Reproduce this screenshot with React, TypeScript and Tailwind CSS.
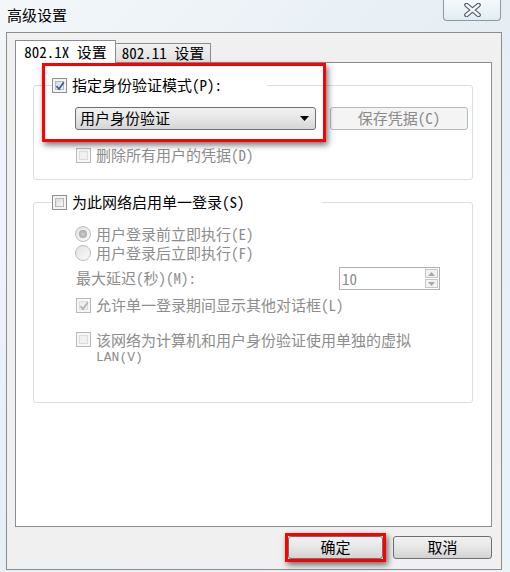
import React from 'react';

const font = "font-['Noto_Sans_Mono_CJK_SC','Noto_Sans_CJK_SC',sans-serif]";

function CheckBox({ checked = false, disabled = false }: { checked?: boolean; disabled?: boolean }) {
    return (
        <span
            className={`relative flex shrink-0 w-[15px] h-[15px] border p-[2px] ${
                disabled ? 'border-[#b8b8b8] bg-[#f7f7f7]' : 'border-[#8e8f8f] bg-[#f4f4f4]'
            }`}
        >
            <span
                className={`flex-1 border ${
                    disabled
                        ? 'border-[#dcdcdc] bg-[#f0f0f0]'
                        : 'border-[#b9b9b9] bg-linear-to-br from-[#d9d9d9] to-[#fafafa]'
                }`}
            />
            {checked && (
                <svg className="absolute left-[1px] top-[1px]" width="12" height="12" viewBox="0 0 12 12">
                    <path
                        d="M2.5 6.2 L5 9 L9.8 2.2"
                        fill="none"
                        stroke={disabled ? '#b4b4b4' : '#3f5aa8'}
                        strokeWidth="1.8"
                    />
                </svg>
            )}
        </span>
    );
}

function Radio({ checked = false }: { checked?: boolean }) {
    return (
        <span className="flex shrink-0 items-center justify-center w-[16px] h-[16px] rounded-full border border-[#bdbdbd] bg-linear-to-br from-[#e2e2e2] to-[#fbfbfb]">
            {checked && <span className="w-[8px] h-[8px] rounded-full bg-radial from-[#d0d0d0] to-[#9a9a9a]" />}
        </span>
    );
}

function Legend({ width, children }: { width: string; children: React.ReactNode }) {
    return (
        <div className={`relative z-10 -mb-[8px] ml-[19px] flex h-[16px] items-center gap-[5px] bg-white ${width}`}>
            {children}
        </div>
    );
}

export default function App() {
    return (
        <div
            className={`w-[510px] h-[572px] overflow-hidden bg-linear-to-br from-[#f3f7fa] via-[#e6eef4] to-[#eaf3f7] text-[15px] text-black ${font}`}
        >
            {/* title bar */}
            <div className="flex h-[32px] items-start justify-between">
                <div className="pl-[7px] pt-[5px] leading-[20px] [text-shadow:0_0_6px_#fff]">高级设置</div>
                <div className="mr-[9px] flex h-[21px] w-[58px] items-center justify-center rounded-b-[4px] border border-t-0 border-[#8d98a5] bg-linear-to-b from-[#f6fafc] to-[#dfeef3]">
                    <svg width="17" height="14" viewBox="0 0 17 14">
                        <path d="M2.5 2 L14.5 12 M14.5 2 L2.5 12" stroke="#4b5563" strokeWidth="4.6" strokeLinecap="round" />
                        <path d="M2.5 2 L14.5 12 M14.5 2 L2.5 12" stroke="#f4f6f8" strokeWidth="2.4" strokeLinecap="round" />
                    </svg>
                </div>
            </div>

            {/* client area */}
            <div className="ml-[6px] flex h-[538px] w-[496px] flex-col border border-[#8c8c8c] bg-[#f0f0f0] pl-[8px] pr-[9px] pt-[7px]">
                <div className="flex h-[22px] items-end">
                    <div className="relative z-10 -mb-px flex h-[23px] w-[101px] items-center justify-center border border-b-0 border-[#898c95] bg-white">
                        802.1X 设置
                    </div>
                    <div className="flex h-[19px] w-[95px] items-center justify-center border border-l-0 border-b-0 border-[#898c95] bg-linear-to-b from-[#f2f2f2] to-[#e1e1e1]">
                        802.11 设置
                    </div>
                </div>

                <div className="relative h-[465px] w-[477px] border border-[#898c95] bg-white pl-[17px]">
                    {/* group 1 */}
                    <div className="mt-[14px] w-[440px]">
                        <Legend width="w-[215px]">
                            <CheckBox checked />
                            <span>指定身份验证模式(P):</span>
                        </Legend>
                        <div className="h-[95px] rounded-[3px] border border-[#d5dfe5] pl-[41px] pt-[21px]">
                            <div className="flex gap-[14px]">
                                <div className="flex h-[23px] w-[241px] items-center justify-between rounded-[3px] border border-[#707070] bg-linear-to-b from-[#f2f2f2] via-[#e6e6e6] to-[#d6d6d6] pl-[4px] pr-[6px]">
                                    <span>用户身份验证</span>
                                    <svg width="9" height="5" viewBox="0 0 9 5">
                                        <path d="M0 0 H9 L4.5 5 Z" fill="#000" />
                                    </svg>
                                </div>
                                <div className="flex h-[23px] w-[138px] items-center justify-center rounded-[3px] border border-[#b5b9bc] bg-[#f4f4f4] text-[#8a8a8a]">
                                    保存凭据(C)
                                </div>
                            </div>
                            <div className="mt-[17px] flex h-[16px] items-center gap-[5px] pl-[1px] text-[#8d8d8d]">
                                <CheckBox disabled />
                                <span>删除所有用户的凭据(D)</span>
                            </div>
                        </div>
                    </div>

                    {/* group 2 */}
                    <div className="mt-[14px] w-[440px]">
                        <Legend width="w-[270px]">
                            <CheckBox />
                            <span>为此网络启用单一登录(S)</span>
                        </Legend>
                        <div className="h-[201px] rounded-[3px] border border-[#d5dfe5] pl-[41px] pr-[32px] pt-[22px] text-[#8d8d8d]">
                            <div className="flex h-[18px] items-center gap-[5px]">
                                <Radio checked />
                                <span>用户登录前立即执行(E)</span>
                            </div>
                            <div className="mt-px flex h-[18px] items-center gap-[5px]">
                                <Radio />
                                <span>用户登录后立即执行(F)</span>
                            </div>
                            <div className="mt-[5px] flex h-[23px] items-center justify-between pl-[1px]">
                                <span>最大延迟(秒)(M):</span>
                                <div className="flex h-[23px] w-[101px] border border-[#b0b0b0] bg-white">
                                    <span className="flex-1 pl-[2px] leading-[21px]">10</span>
                                    <div className="my-[1px] mr-[1px] flex w-[13px] flex-col gap-px">
                                        <span className="flex flex-1 items-center justify-center border border-[#c6c6c6] bg-[#f2f2f2]">
                                            <svg width="7" height="4" viewBox="0 0 7 4">
                                                <path d="M0 4 L3.5 0 L7 4 Z" fill="#a8a8a8" />
                                            </svg>
                                        </span>
                                        <span className="flex flex-1 items-center justify-center border border-[#c6c6c6] bg-[#f2f2f2]">
                                            <svg width="7" height="4" viewBox="0 0 7 4">
                                                <path d="M0 0 L7 0 L3.5 4 Z" fill="#a8a8a8" />
                                            </svg>
                                        </span>
                                    </div>
                                </div>
                            </div>
                            <div className="mt-[6px] flex h-[18px] items-center gap-[5px] pl-[1px]">
                                <CheckBox checked disabled />
                                <span>允许单一登录期间显示其他对话框(L)</span>
                            </div>
                            <div className="mt-[18px] flex items-start gap-[5px] pl-[1px]">
                                <CheckBox disabled />
                                <div className="-mt-[2px] flex flex-col">
                                    <span className="h-[19px] leading-[19px]">该网络为计算机和用户身份验证使用单独的虚拟</span>
                                    <span className="h-[17px] font-['Liberation_Mono',monospace] text-[13px] leading-[17px]">LAN(V)</span>
                                </div>
                            </div>
                        </div>
                    </div>

                    {/* annotation box */}
                    <div className="pointer-events-none absolute left-[26px] top-0 h-[79px] w-[284px] border-[3px] border-[#ff0000] shadow-[2px_3px_6px_rgba(0,0,0,0.55)]" />
                </div>

                {/* dialog buttons */}
                <div className="mt-[9px] flex justify-end gap-[10px]">
                    <div className="relative">
                        <button className="flex h-[23px] w-[95px] items-center justify-center rounded-[3px] border border-[#707070] bg-linear-to-b from-[#f2f2f2] via-[#e6e6e6] to-[#d3d3d3]">
                            确定
                        </button>
                        <span className="pointer-events-none absolute -inset-[3px] border-[3px] border-[#ff0000] shadow-[2px_3px_6px_rgba(0,0,0,0.55)]" />
                    </div>
                    <button className="flex h-[23px] w-[99px] items-center justify-center rounded-[3px] border border-[#707070] bg-linear-to-b from-[#f2f2f2] via-[#e6e6e6] to-[#d3d3d3]">
                        取消
                    </button>
                </div>
            </div>
        </div>
    );
}
